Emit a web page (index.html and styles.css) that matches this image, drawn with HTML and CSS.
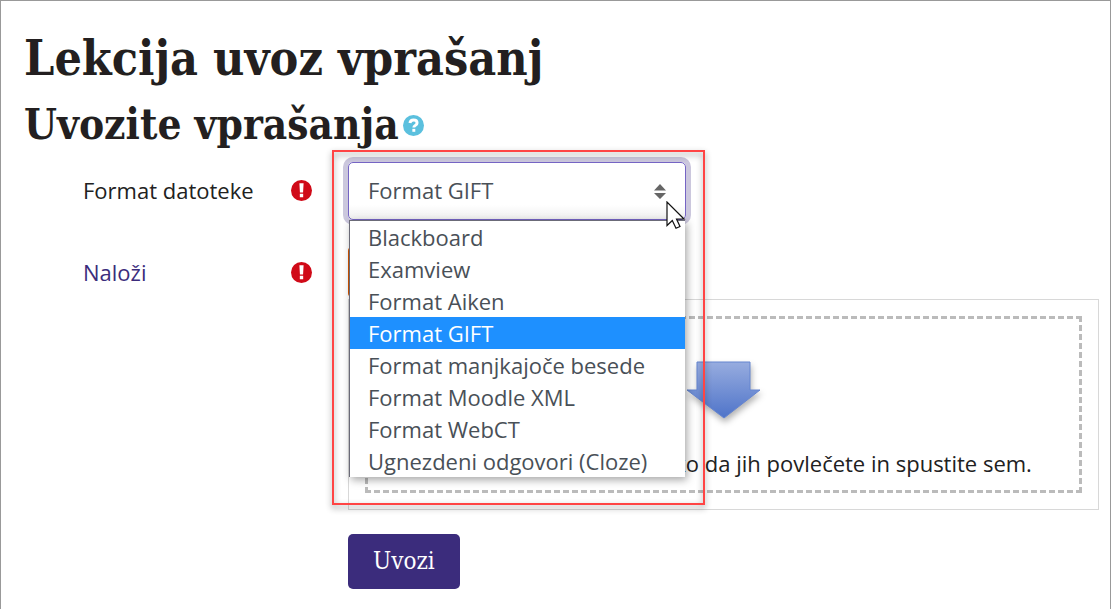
FILE: index.html
```
<!DOCTYPE html>
<html lang="sl">

<head>
    <meta charset="UTF-8">
    <meta name="viewport" content="width=device-width, initial-scale=1.0">
    <title>Lekcija uvoz vprašanj</title>
    <link rel="stylesheet" href="styles.css">
</head>

<body>
    <main class="page">
        <h1>Lekcija uvoz vprašanj</h1>
        <div class="heading-row">
            <h2>Uvozite vprašanja</h2>
            <button type="button" class="help-btn" aria-label="Pomoč">
                <svg viewBox="0 0 20 20" width="21" height="21">
                    <circle cx="10" cy="10" r="10" fill="#5bc0de" />
                    <path d="M6.600 7.700C6.900 5.700 8.200 4.800 10 4.800c2 0 3.400 1.100 3.400 2.800 0 2.300-3.100 2.200-3.100 4.300" fill="none" stroke="#fff" stroke-width="2.800" />
                    <rect x="8.900" y="13.200" width="2.800" height="2.800" fill="#fff" />
                </svg>
            </button>
        </div>

        <form class="import-form">
            <div class="form-row">
                <div class="form-label">
                    <label for="format">Format datoteke</label>
                    <svg class="required" viewBox="0 0 20 20" width="21" height="21">
                        <circle cx="10" cy="10" r="10" fill="#d00a18" />
                        <path d="M8 3.200h4l-.5 8.600h-3z M8.400 13.200h3.200v3.200H8.400z" fill="#fff" />
                    </svg>
                </div>
                <div class="select-wrap">
                    <select id="format" class="format-select">
                        <option>Format GIFT</option>
                    </select>
                    <svg class="select-arrows" viewBox="0 0 12 16" width="12" height="16">
                        <path d="M6 0l6 6.500H0z M0 9h12l-6 6z" fill="#666" />
                    </svg>

                    <!-- Open list of formats -->
                    <ul class="format-list" role="listbox">
                        <li role="option">Blackboard</li>
                        <li role="option">Examview</li>
                        <li role="option">Format Aiken</li>
                        <li role="option" class="selected" aria-selected="true">Format GIFT</li>
                        <li role="option">Format manjkajoče besede</li>
                        <li role="option">Format Moodle XML</li>
                        <li role="option">Format WebCT</li>
                        <li role="option">Ugnezdeni odgovori (Cloze)</li>
                    </ul>
                    <div class="highlight"></div>
                    <svg class="cursor" viewBox="0 0 20 29" width="20" height="29">
                        <path d="M1 1v23.500l5.300-5L10 27.300l4-1.800-3.500-7.500H18z" fill="#fff" stroke="#111" stroke-width="1.200" />
                    </svg>
                </div>
            </div>

            <div class="form-row">
                <div class="form-label">
                    <a href="#files">Naloži</a>
                    <svg class="required" viewBox="0 0 20 20" width="21" height="21">
                        <circle cx="10" cy="10" r="10" fill="#d00a18" />
                        <path d="M8 3.200h4l-.5 8.600h-3z M8.400 13.200h3.200v3.200H8.400z" fill="#fff" />
                    </svg>
                </div>
                <div class="file-field" id="files">
                    <button type="button" class="choose-btn">Izberite datoteko...</button>
                    <div class="file-panel">
                        <div class="drop-area">
                            <svg class="drop-arrow" viewBox="0 0 76 60" width="76" height="60">
                                <defs>
                                    <linearGradient id="arrow-fill" x1="0" y1="0" x2="0" y2="1">
                                        <stop offset="0" stop-color="#97acdf" />
                                        <stop offset="1" stop-color="#4f74c9" />
                                    </linearGradient>
                                </defs>
                                <path d="M11 1h53v28h10L38 57 1 29h10z" fill="url(#arrow-fill)" stroke="#6585d0" />
                            </svg>
                            <p>Datoteke lahko dodate tako da jih povlečete in spustite sem.</p>
                        </div>
                    </div>
                </div>
            </div>

            <div class="form-row">
                <button type="button" class="submit-btn">Uvozi</button>
            </div>
        </form>
    </main>
</body>

</html>
```

FILE: styles.css
```
* {
    box-sizing: border-box;
}

body {
    margin: 0;
    background-color: #fff;
    color: #212121;
    font-family: "Open Sans", sans-serif;
    font-size: 22px;
    line-height: 32px;
}

.page {
    min-height: 100vh;
    padding: 23px 11px 20px 23px;
    border: 1px solid #999;
}

h1,
h2 {
    margin: 0;
    color: #231f20;
    font-family: "DejaVu Serif Condensed", "DejaVu Serif", serif;
    font-weight: bold;
}

h1 {
    font-size: 48px;
    line-height: 68px;
}

h2 {
    font-size: 42px;
    line-height: 66px;
}

.heading-row {
    display: flex;
    align-items: center;
    gap: 4px;
}

.help-btn {
    display: flex;
    padding: 0;
    border: none;
    background: none;
}

/* Form */
.import-form {
    display: flex;
    flex-direction: column;
    gap: 24px;
    padding: 4px 0 0 59px;
}

.form-row {
    display: grid;
    grid-template-columns: 265px 1fr;
}

.form-label {
    display: flex;
    align-items: center;
    justify-content: space-between;
    height: 56px;
    padding-right: 36px;
}

.form-label a {
    color: #3b2c7c;
    text-decoration: none;
}

.select-wrap {
    position: relative;
    width: 45%;
}

.format-select {
    display: block;
    width: 100%;
    height: 58px;
    padding: 0 19px 2px;
    border: 1px solid #7564c4;
    border-radius: 5px;
    background: linear-gradient(#fff 75%, #efefef);
    box-shadow: 0 0 0 5px #cbc7dd;
    color: #495057;
    font: inherit;
    appearance: none;
}

.select-arrows {
    position: absolute;
    top: 22px;
    right: 20px;
}

.format-list {
    position: absolute;
    z-index: 1;
    top: 100%;
    left: 1px;
    right: 1px;
    margin: 0;
    padding: 0;
    border-top: 1px solid #6b6b78;
    border-left: 1px solid #6b6b78;
    background-color: #fff;
    box-shadow: 2px 3px 8px rgba(0, 0, 0, 0.35);
    color: #495057;
    list-style: none;
}

.format-list li {
    padding: 0 18px;
    white-space: nowrap;
}

.format-list .selected {
    background-color: #1e90ff;
    color: #fff;
}

.highlight {
    position: absolute;
    z-index: 2;
    top: -12px;
    left: -16px;
    right: -19px;
    height: 355px;
    border: 2px solid #ff4444;
    filter: drop-shadow(0 3px 3px rgba(0, 0, 0, 0.45));
    pointer-events: none;
}

.cursor {
    position: absolute;
    z-index: 3;
    top: 39px;
    right: 0;
}

/* File upload */
.choose-btn {
    display: block;
    height: 50px;
    margin: 3px 0 2px;
    padding: 0 24px;
    border: none;
    border-radius: 4px;
    background-color: #d45500;
    color: #fff;
    font: inherit;
}

.file-panel {
    padding: 16px;
    border: 1px solid #d8d8d8;
}

.drop-area {
    display: flex;
    flex-direction: column;
    align-items: center;
    gap: 26px;
    padding: 42px 0 11px;
    border: 3px dashed #bbb;
}

.drop-area p {
    margin: 0;
}

.drop-arrow {
    filter: drop-shadow(1px 4px 3px rgba(0, 0, 0, 0.3));
}

.submit-btn {
    grid-column: 2;
    justify-self: start;
    height: 55px;
    padding: 0 25px 2px;
    border: none;
    border-radius: 5px;
    background-color: #3b2c7c;
    color: #fff;
    font-family: "DejaVu Serif Condensed", "DejaVu Serif", serif;
    font-size: 24px;
}
```
